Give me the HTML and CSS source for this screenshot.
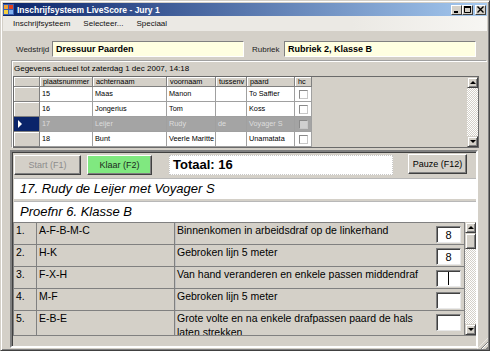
FILE: index.html
```html
<!DOCTYPE html>
<html lang="nl">
<head>
  <meta charset="UTF-8">
  <title>Inschrijfsysteem LiveScore - Jury 1</title>
  <link rel="stylesheet" href="styles.css">
</head>
<body>
  <div class="window">
    <div class="titlebar">
      <svg class="app-icon" width="11" height="11" viewBox="0 0 11 11">
        <rect x="0" y="0" width="11" height="11" fill="#3a5fb0"/>
        <rect x="1" y="1" width="4" height="4" fill="#f0a030"/>
        <rect x="6" y="1" width="4" height="4" fill="#e04020"/>
        <rect x="1" y="6" width="4" height="4" fill="#f4d040"/>
        <rect x="6" y="6" width="4" height="4" fill="#7fb0f0"/>
      </svg>
      <span class="title">Inschrijfsysteem LiveScore - Jury 1</span>
      <div class="caption-btns">
        <span class="cbtn"><svg width="7" height="7" viewBox="0 0 7 7"><rect x="1" y="5" width="4" height="2" fill="#000"/></svg></span>
        <span class="cbtn"><svg width="7" height="7" viewBox="0 0 7 7"><path d="M0.5 0.5h6v6h-6z" fill="none" stroke="#000"/><rect x="0" y="0" width="7" height="2" fill="#000"/></svg></span>
        <span class="cbtn cbtn-close"><svg width="7" height="7" viewBox="0 0 7 7"><path d="M0.5 0.5l6 6M6.5 0.5l-6 6" stroke="#000" stroke-width="1.4"/></svg></span>
      </div>
    </div>

    <div class="menubar">
      <span>Inschrijfsysteem</span>
      <span>Selecteer...</span>
      <span>Speciaal</span>
    </div>

    <div class="form">
      <div class="fields">
        <label class="lbl">Wedstrijd</label>
        <div class="field">Dressuur Paarden</div>
        <label class="lbl lbl-rubriek">Rubriek</label>
        <div class="field">Rubriek 2, Klasse B</div>
      </div>

      <div class="group">
        <div class="group-caption">Gegevens actueel tot zaterdag 1 dec 2007, 14:18</div>
        <div class="grid">
          <div class="dg">
            <div class="dg-rh dg-head"></div>
            <div class="dg-th">plaatsnummer</div>
            <div class="dg-th">achternaam</div>
            <div class="dg-th">voornaam</div>
            <div class="dg-th">tussenv</div>
            <div class="dg-th">paard</div>
            <div class="dg-th">hc</div>

            <div class="dg-rh"></div>
            <div class="dg-td">15</div>
            <div class="dg-td">Maas</div>
            <div class="dg-td">Manon</div>
            <div class="dg-td"></div>
            <div class="dg-td">To Saffier</div>
            <div class="dg-td dg-check"><span class="chk"></span></div>

            <div class="dg-rh"></div>
            <div class="dg-td">16</div>
            <div class="dg-td">Jongerius</div>
            <div class="dg-td">Tom</div>
            <div class="dg-td"></div>
            <div class="dg-td">Koss</div>
            <div class="dg-td dg-check"><span class="chk"></span></div>

            <div class="dg-rh current"><span class="row-arrow"></span></div>
            <div class="dg-td sel">17</div>
            <div class="dg-td sel">Leijer</div>
            <div class="dg-td sel">Rudy</div>
            <div class="dg-td sel">de</div>
            <div class="dg-td sel">Voyager S</div>
            <div class="dg-td sel dg-check"><span class="chk"></span></div>

            <div class="dg-rh"></div>
            <div class="dg-td">18</div>
            <div class="dg-td">Bunt</div>
            <div class="dg-td">Veerle Maritte</div>
            <div class="dg-td"></div>
            <div class="dg-td">Unamatata</div>
            <div class="dg-td dg-check"><span class="chk"></span></div>
          </div>
          <div class="dg-fill"></div>
          <div class="vscroll">
            <span class="sb-btn"><span class="arrow-up"></span></span>
            <span class="sb-track"></span>
            <span class="sb-btn"><span class="arrow-down"></span></span>
          </div>
        </div>
      </div>

      <div class="panel">
        <div class="toolbar">
          <div class="btn btn-start">Start (F1)</div>
          <div class="btn btn-klaar">Klaar (F2)</div>
          <div class="totaal">Totaal: 16</div>
          <div class="btn btn-pauze">Pauze (F12)</div>
        </div>
        <div class="line">17. Rudy de Leijer met Voyager S</div>
        <div class="line line-proef">Proefnr 6. Klasse B</div>

        <div class="exercises">
          <div class="ex-table">
            <div class="ex-row">
              <div class="ex-nr">1.</div>
              <div class="ex-code">A-F-B-M-C</div>
              <div class="ex-desc"><span>Binnenkomen in arbeidsdraf op de linkerhand</span><span class="score">8</span></div>
            </div>
            <div class="ex-row">
              <div class="ex-nr">2.</div>
              <div class="ex-code">H-K</div>
              <div class="ex-desc"><span>Gebroken lijn 5 meter</span><span class="score">8</span></div>
            </div>
            <div class="ex-row">
              <div class="ex-nr">3.</div>
              <div class="ex-code">F-X-H</div>
              <div class="ex-desc"><span>Van hand veranderen en enkele passen middendraf</span><span class="score"><span class="caret"></span></span></div>
            </div>
            <div class="ex-row">
              <div class="ex-nr">4.</div>
              <div class="ex-code">M-F</div>
              <div class="ex-desc"><span>Gebroken lijn 5 meter</span><span class="score"></span></div>
            </div>
            <div class="ex-row ex-row-tall">
              <div class="ex-nr">5.</div>
              <div class="ex-code">E-B-E</div>
              <div class="ex-desc"><span>Grote volte en na enkele drafpassen paard de hals<br>laten strekken</span><span class="score"></span></div>
            </div>
          </div>
          <div class="vscroll ex-scroll">
            <span class="sb-btn"><span class="arrow-up"></span></span>
            <span class="sb-thumb"></span>
            <span class="sb-track"></span>
            <span class="sb-btn"><span class="arrow-down"></span></span>
          </div>
        </div>
      </div>
    </div>

    <div class="size-grip"></div>
  </div>
</body>
</html>
```

FILE: styles.css
```css
* { box-sizing: border-box; }
body { margin: 0; font-family: "Liberation Sans", Arial, sans-serif; font-size: 8px; color: #000; background: #d4d0c8; }

.window { position: relative; width: 490px; height: 351px; display: flex; flex-direction: column; overflow: hidden; padding: 2px; background: #d4d0c8; border: 1px solid; border-color: #d4d0c8 #404040 #404040 #d4d0c8; box-shadow: inset 1px 1px #fff, inset -1px -1px #808080; }

/* title bar */
.titlebar { height: 13px; display: flex; align-items: center; background: linear-gradient(to right, #0a246a, #a6caf0); }
.app-icon { margin-right: 3px; flex: none; }
.title { color: #fff; font-weight: bold; font-size: 8.5px; }
.caption-btns { margin-left: auto; display: flex; padding-right: 1px; }
.cbtn { width: 11px; height: 10px; display: flex; align-items: center; justify-content: center; background: #d4d0c8; border: 1px solid; border-color: #fff #404040 #404040 #fff; }
.cbtn-close { margin-left: 2px; }

/* menu */
.menubar { height: 15px; display: flex; align-items: center; gap: 13px; padding-left: 10px; background: linear-gradient(to right, #ebe9e4 72%, #f7f6f3); color: #111; }

/* top form */
.form { flex: 1; display: flex; flex-direction: column; }
.fields { display: flex; align-items: center; height: 16px; margin-top: 10px; padding-left: 13px; }
.lbl { width: 36px; color: #222; }
.lbl-rubriek { width: 32px; margin-left: 8px; }
.field { width: 192px; height: 16px; padding-left: 3px; line-height: 14px; font-size: 9px; font-weight: bold; background: #ffffe1; border: 1px solid; border-color: #808080 #fff #fff #808080; }

/* data grid */
.group { margin: 4px 0 0 9px; border-top: 1px solid #fff; border-left: 1px solid #fff; box-shadow: -1px -1px #a0a0a0; }
.group-caption { height: 14px; line-height: 14px; padding-left: 1px; }
.grid { width: 466px; height: 72px; display: flex; background: #d4d0c8; border: 1px solid #6a6a6a; font-size: 7.3px; }
.dg { display: grid; grid-template-columns: 26px 53px 74px 49px 31px 48px 17px; grid-template-rows: 10px repeat(4, 15px); }
.dg-th { padding-left: 3px; line-height: 9px; white-space: nowrap; overflow: hidden; background: #d4d0c8; border-right: 1px solid #808080; border-bottom: 1px solid #808080; box-shadow: inset 1px 1px #fff; }
.dg-rh { position: relative; background: #d4d0c8; border-right: 1px solid #808080; border-bottom: 1px solid #808080; box-shadow: inset 1px 1px #fff; }
.dg-rh.current { background: #0a246a; box-shadow: none; }
.row-arrow { position: absolute; left: 4px; top: 3px; border-left: 4px solid #fff; border-top: 4px solid transparent; border-bottom: 4px solid transparent; }
.dg-td { padding-left: 2px; line-height: 14px; white-space: nowrap; overflow: hidden; background: #fff; border-right: 1px solid #a0a0a0; border-bottom: 1px solid #a0a0a0; }
.dg-td.sel { background: #a4a4a4; color: #dcdcdc; }
.dg-check { display: flex; align-items: center; justify-content: center; padding-left: 0; }
.chk { width: 9px; height: 9px; background: #fff; border: 1px solid; border-color: #8a8a8a #c8c8c8 #c8c8c8 #8a8a8a; }
.sel .chk { background: #d0d0d0; }
.dg-fill { flex: 1; }

/* scrollbars */
.vscroll { width: 11px; display: flex; flex-direction: column; }
.sb-btn { height: 11px; flex: none; display: flex; align-items: center; justify-content: center; background: #d4d0c8; border: 1px solid; border-color: #d4d0c8 #404040 #404040 #d4d0c8; box-shadow: inset 1px 1px #fff, inset -1px -1px #808080; }
.sb-track { flex: 1; background: repeating-conic-gradient(#fff 0 25%, #d4d0c8 0 50%) 0 0 / 2px 2px; }
.sb-thumb { height: 16px; flex: none; background: #d4d0c8; border: 1px solid; border-color: #d4d0c8 #404040 #404040 #d4d0c8; box-shadow: inset 1px 1px #fff, inset -1px -1px #808080; }
.arrow-up { border-bottom: 3px solid #000; border-left: 3px solid transparent; border-right: 3px solid transparent; }
.arrow-down { border-top: 3px solid #000; border-left: 3px solid transparent; border-right: 3px solid transparent; }

/* bottom panel */
.panel { width: 468px; flex: 1; margin: 2px 0 0 7px; padding: 1px 0 0 2px; border: 2px solid; border-color: #808080 #fff #fff #808080; box-shadow: inset 1px 1px #404040; }
.toolbar { display: flex; height: 20px; margin-top: 2px; }
.btn { height: 20px; display: flex; align-items: center; justify-content: center; font-size: 9px; background: #d4d0c8; border: 1px solid; border-color: #fff #404040 #404040 #fff; box-shadow: inset -1px -1px #808080; }
.btn-start { width: 67px; color: #8c8c8c; }
.btn-klaar { width: 65px; margin-left: 6px; background: #80e880; color: #1c2a1c; }
.totaal { width: 224px; margin-left: 17px; padding-left: 3px; line-height: 18px; font-size: 13px; font-weight: bold; background: #fff; border: 1px dotted #c8c8c8; }
.btn-pauze { width: 59px; margin-left: 15px; margin-top: -1px; }
.line { width: 462px; height: 21px; margin-top: 3px; padding-left: 6px; line-height: 20px; font-size: 13px; font-style: italic; background: #fff; border-top: 1px solid #b8b8b8; }
.line-proef { margin-top: 2px; }

/* exercises */
.exercises { display: flex; width: 463px; height: 114px; margin-left: -1px; overflow: hidden; border-bottom: 1px solid #808080; }
.ex-table { width: 452px; border-left: 1px solid #808080; }
.ex-row { display: grid; grid-template-columns: 23px 138px 290px; height: 22px; border-top: 1px solid #808080; font-size: 10.5px; }
.ex-row-tall { height: auto; }
.ex-nr, .ex-code { padding: 0 2px; line-height: 14px; border-right: 1px solid #808080; }
.ex-code { box-shadow: 1px 0 #c0c0c0; }
.ex-desc { display: flex; justify-content: space-between; align-items: flex-start; padding: 0 3px 0 2px; line-height: 14px; border-right: 1px solid #808080; }
.score { width: 25px; height: 17px; margin-top: 3px; flex: none; display: flex; align-items: center; justify-content: center; font-size: 11px; background: #fff; border: 1px solid; border-color: #808080 #e8e8e8 #e8e8e8 #808080; box-shadow: inset 1px 1px #404040; }
.caret { width: 1px; height: 13px; background: #000; }
.ex-scroll { width: 11px; }

.size-grip { position: absolute; right: 1px; bottom: 1px; width: 11px; height: 11px; background: repeating-linear-gradient(135deg, transparent 0 2px, #808080 2px 3px, #fff 3px 4px); clip-path: polygon(100% 0, 100% 100%, 0 100%); }
```
